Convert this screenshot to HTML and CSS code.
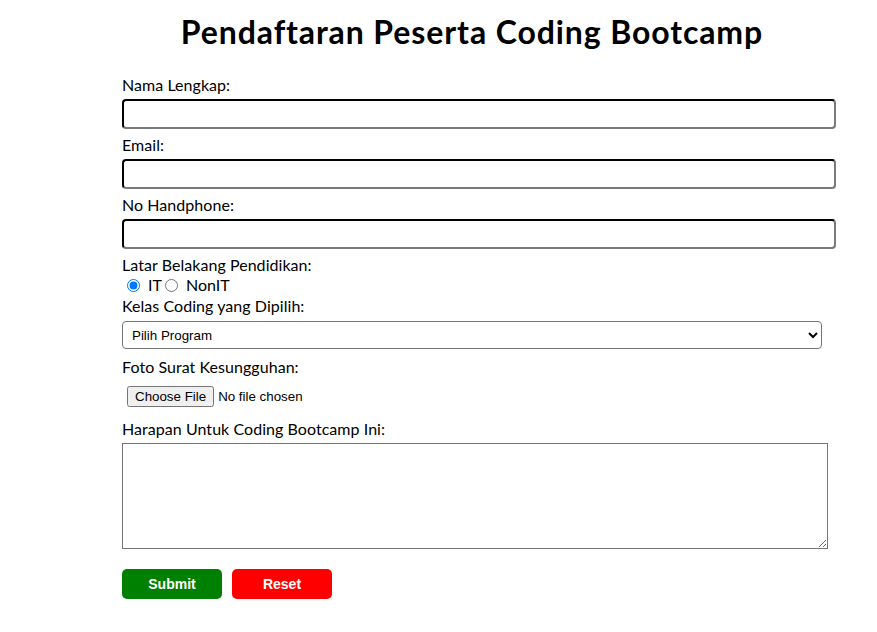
FILE: index.html
```html
<!DOCTYPE html>
<html lang="id">
<head>
<meta charset="utf-8">
<title>Pendaftaran Peserta Coding Bootcamp</title>
<link rel="stylesheet" href="styles.css">
</head>
<body>
<div class="container">
  <h1 class="title">Pendaftaran Peserta Coding Bootcamp</h1>
  <form class="form">
    <label class="label" for="nama">Nama Lengkap:</label>
    <input class="text-input" type="text" id="nama">
    <label class="label" for="email">Email:</label>
    <input class="text-input" type="email" id="email">
    <label class="label" for="hp">No Handphone:</label>
    <input class="text-input" type="tel" id="hp">
    <label class="label">Latar Belakang Pendidikan:</label>
    <div class="radio-row">
      <input class="radio" type="radio" name="latar" id="it" checked>
      <label class="radio-label" for="it">IT</label>
      <input class="radio radio-next" type="radio" name="latar" id="nonit">
      <label class="radio-label" for="nonit">NonIT</label>
    </div>
    <label class="label" for="kelas">Kelas Coding yang Dipilih:</label>
    <select class="select" id="kelas">
      <option>Pilih Program</option>
    </select>
    <label class="label" for="foto">Foto Surat Kesungguhan:</label>
    <input class="file" type="file" id="foto">
    <label class="label" for="harapan">Harapan Untuk Coding Bootcamp Ini:</label>
    <textarea class="area" id="harapan"></textarea>
    <div class="buttons">
      <button type="submit" class="btn btn-submit">Submit</button>
      <button type="reset" class="btn btn-reset">Reset</button>
    </div>
  </form>
</div>
</body>
</html>
```
FILE: styles.css
```css
html, body {
  margin: 0;
  padding: 0;
  background: #fff;
  color: #000;
}
body {
  font-family: "Lato", "Noto Sans", sans-serif;
  font-size: 16px;
}
.container {
  width: 700px;
  margin-left: 122px;
}
.title {
  margin: 0;
  padding-top: 10px;
  height: 64px;
  font-size: 32px;
  line-height: 44px;
  font-weight: 700;
  letter-spacing: 0.9px;
  text-align: center;
}
.form {
  display: flex;
  flex-direction: column;
  align-items: flex-start;
}
.label {
  display: block;
  line-height: 21px;
  letter-spacing: 0.05px;
}
.text-input {
  box-sizing: border-box;
  width: 714px;
  height: 30px;
  margin: 4px 0 5px;
  padding: 5px;
  border: 2px inset #767676;
  border-top-color: #1b1b1b;
  border-left-color: #1b1b1b;
  border-right-color: #7a7a7a;
  border-bottom-color: #7a7a7a;
  border-radius: 4px;
  font-size: 13.33px;
  background: #fff;
}
.radio-row {
  display: flex;
  align-items: center;
  height: 20px;
  line-height: 20px;
}
.radio {
  margin: 0 3px 0 5px;
  width: 13px;
  height: 13px;
}
.radio-next {
  margin-left: 3px;
}
.radio-label {
  margin-left: 5px;
}
.select {
  box-sizing: border-box;
  width: 700px;
  height: 28px;
  margin: 5px 0 7px;
  padding: 0 5px;
  border: 1px solid #767676;
  border-radius: 4px;
  background: #fff;
  font-family: "Liberation Sans", Arial, sans-serif;
  font-size: 13.33px;
  color: #000;
}
.file {
  margin: 9px 0 11px 5px;
  font-family: "Liberation Sans", Arial, sans-serif;
  font-size: 13.33px;
}
.area {
  box-sizing: border-box;
  width: 706px;
  height: 106px;
  margin: 4px 0 20px;
  padding: 2px;
  border: 1px solid #767676;
  resize: both;
}
.buttons {
  display: flex;
  gap: 10px;
}
.btn {
  width: 100px;
  height: 30px;
  border: none;
  border-radius: 5px;
  color: #fff;
  font-family: "Liberation Sans", Arial, sans-serif;
  font-size: 14px;
  font-weight: 700;
}
.btn-submit {
  background: #008000;
}
.btn-reset {
  background: #ff0000;
}
```
